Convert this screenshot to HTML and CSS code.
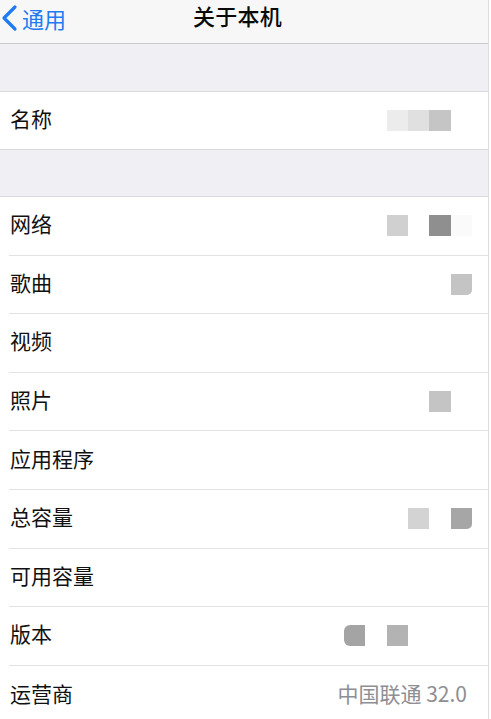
FILE: index.html
```html
<!DOCTYPE html>
<html lang="zh">
<head>
<meta charset="utf-8">
<title>关于本机</title>
<link rel="stylesheet" href="styles.css">
</head>
<body>
<div class="page">
  <header class="nav">
    <a class="back">
      <svg class="chev" width="19" height="28" viewBox="0 0 19 28"><path d="M15 3 L4 14 L15 25" fill="none" stroke="#1e7cf0" stroke-width="3.2" stroke-linecap="round" stroke-linejoin="round"/></svg>
      <span>通用</span>
    </a>
    <h1 class="title">关于本机</h1>
    <span></span>
  </header>
  <div class="gap"></div>
  <section class="group">
    <div class="row single">
      <span class="label">名称</span>
      <div class="cells"><i></i><i></i><i class="g1"></i><i class="g2"></i><i class="g3"></i><i></i></div>
    </div>
  </section>
  <div class="gap gap2"></div>
  <section class="group">
    <div class="row"><span class="label">网络</span>
      <div class="cells"><i></i><i></i><i class="g4"></i><i></i><i class="g5"></i><i class="g6"></i></div></div>
    <div class="row"><span class="label">歌曲</span>
      <div class="cells"><i></i><i></i><i></i><i></i><i></i><i class="g7 rbr"></i></div></div>
    <div class="row"><span class="label">视频</span>
      <div class="cells"><i></i><i></i><i></i><i></i><i></i><i></i></div></div>
    <div class="row"><span class="label">照片</span>
      <div class="cells"><i></i><i></i><i></i><i></i><i class="g7"></i><i></i></div></div>
    <div class="row"><span class="label">应用程序</span>
      <div class="cells"><i></i><i></i><i></i><i></i><i></i><i></i></div></div>
    <div class="row"><span class="label">总容量</span>
      <div class="cells"><i></i><i></i><i></i><i class="g8"></i><i></i><i class="g9 rbr"></i></div></div>
    <div class="row"><span class="label">可用容量</span>
      <div class="cells"><i></i><i></i><i></i><i></i><i></i><i></i></div></div>
    <div class="row"><span class="label">版本</span>
      <div class="cells"><i class="g10 rl"></i><i></i><i class="g11"></i><i></i><i></i><i></i></div></div>
    <div class="row last"><span class="label">运营商</span>
      <span class="value">中国联通 32.0</span></div>
  </section>
</div>
</body>
</html>
```
FILE: styles.css
```css
* { box-sizing: border-box; }
html, body { margin: 0; padding: 0; background: #ffffff; }
body {
  font-family: "Noto Sans CJK SC", "Noto Sans", sans-serif;
  color: #111;
  overflow: hidden;
}
.page {
  width: 489px;
  border-right: 1px solid #dedee2;
  min-height: 719px;
  background: #ffffff;
}
.nav {
  height: 44px;
  background: #f7f7f8;
  border-bottom: 1px solid #c9c9cc;
  display: grid;
  grid-template-columns: 1fr auto 1fr;
  align-items: start;
  padding: 3px 13px 0 0;
}
.back {
  display: flex;
  align-items: center;
  color: #1e7cf0;
  font-size: 22px;
  line-height: 24px;
  gap: 3px;
  padding-left: 0;
}
.chev { display: block; margin-top: 1px; }
.title {
  margin: 0;
  font-size: 22px;
  font-weight: 500;
  line-height: 24px;
  color: #0a0a0a;
  letter-spacing: 0.3px;
}
.gap {
  height: 47px;
  background: #efeff4;
}
.gap.gap2 { height: 46px; }
.group {
  border-top: 1px solid #dadade;
  border-bottom: 1px solid #dadade;
  background: #fff;
}
.row {
  height: 58.6px;
  display: flex;
  align-items: center;
  margin-left: 9px;
  padding-left: 1px;
  padding-right: 16px;
  border-bottom: 1px solid #e3e3e6;
}
.row.single { height: 57px; border-bottom: none; }
.row.last { border-bottom: none; height: 60px; }
.label {
  font-size: 21px;
  line-height: 24px;
  padding-bottom: 5px;
  color: #111;
}
.cells {
  margin-left: auto;
  display: flex;
  width: 128px;
  height: 21px;
}
.cells i {
  display: block;
  width: 21.33px;
  height: 21px;
}
.g1 { background: #ececec; }
.g2 { background: #e0e0e0; }
.g3 { background: #c5c5c5; }
.g4 { background: #d0d0d0; }
.g5 { background: #8f8f8f; }
.g6 { background: #fafafa; }
.g7 { background: #c4c4c4; }
.g8 { background: #d3d3d3; }
.g9 { background: #a6a6a6; }
.g10 { background: #a4a4a4; }
.g11 { background: #b3b3b3; }
.rbr { border-bottom-right-radius: 5px; }
.rl { border-top-left-radius: 6px; border-bottom-left-radius: 6px; }
.value {
  margin-left: auto;
  margin-right: 5px;
  font-size: 21px;
  line-height: 24px;
  padding-bottom: 5px;
  color: #8e8e93;
}
```
